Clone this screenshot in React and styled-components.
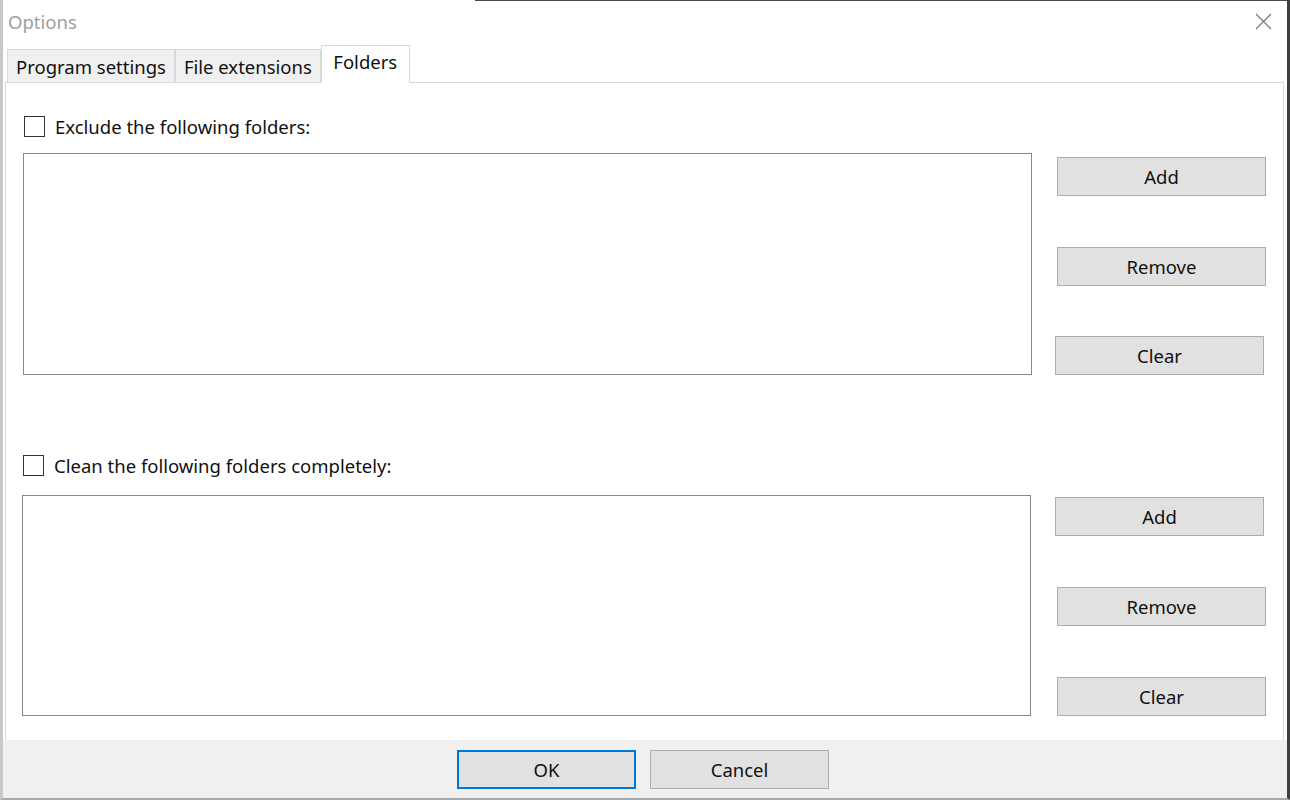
import React from "react";
import styled, { createGlobalStyle } from "styled-components";

const GlobalStyle = createGlobalStyle`
  html, body { margin: 0; padding: 0; background: #ffffff; }
  body { font-family: "Noto Sans", "Open Sans", "Liberation Sans", sans-serif; }
  * { box-sizing: border-box; }
`;

const Window = styled.div`
  width: 1290px;
  height: 800px;
  display: flex;
  flex-direction: column;
  background: #ffffff linear-gradient(#4a4a4a, #4a4a4a) no-repeat 472px 0 / calc(100% - 472px) 1px;
  border-left: 3px solid #c8c8c8;
  border-right: 3px solid #3f3f3f;
  border-bottom: 2px solid #a8a8a8;
  color: #1a1a1a;
`;

const TitleBar = styled.div`
  height: 42px;
  flex: none;
  display: flex;
  align-items: center;
  justify-content: space-between;
  padding: 0 15px 0 5px;
`;

const Title = styled.span`
  font-size: 18.5px;
  color: #a0a0a0;
`;

const CloseButton = styled.button`
  border: 0;
  background: transparent;
  padding: 0;
  width: 18px;
  height: 18px;
  display: flex;
  align-items: center;
  justify-content: center;
`;

const TabStrip = styled.div`
  height: 40px;
  flex: none;
  display: flex;
  align-items: flex-end;
  padding-left: 4px;
  position: relative;
  z-index: 1;
`;

const Tab = styled.div`
  height: ${(p) => (p.$active ? "38px" : "34px")};
  margin-bottom: -1px;
  padding: ${(p) => (p.$active ? "0 11.5px 5px" : "0 8px 0")};
  display: flex;
  align-items: center;
  font-size: 18.5px;
  color: #111;
  background: ${(p) => (p.$active ? "#ffffff" : "#f0f0f0")};
  border: 1px solid #d9d9d9;
  border-bottom: 1px solid ${(p) => (p.$active ? "#ffffff" : "#d9d9d9")};
  & + & { border-left: ${(p) => (p.$active ? "1px solid #d9d9d9" : "0")}; }
`;

const Panel = styled.div`
  flex: 1;
  margin: 0 3px 0 2px;
  border: 1px solid #d9d9d9;
  border-bottom: 0;
  background: #ffffff;
  padding: 33px 15px 24px 17px;
  display: flex;
  flex-direction: column;
`;

const Section = styled.div`
  display: grid;
  grid-template-columns: 1009px 209px;
  column-gap: 25px;
  row-gap: ${(p) => p.$rowGap}px;
  margin-top: ${(p) => p.$top || 0}px;
  margin-left: ${(p) => p.$dx || 0}px;
`;

const CheckRow = styled.label`
  grid-column: 1 / span 2;
  display: flex;
  align-items: center;
  gap: 10px;
  height: 21px;
  margin-left: 1px;
  font-size: 18.5px;
  color: #111;
`;

const CheckBox = styled.span`
  width: 21px;
  height: 21px;
  border: 1px solid #333333;
  background: #ffffff;
  flex: none;
`;

const ListBox = styled.div`
  height: ${(p) => p.$h}px;
  border: 1px solid #828790;
  background: #ffffff;
`;

const ButtonColumn = styled.div`
  display: flex;
  flex-direction: column;
  justify-content: space-between;
  padding-top: ${(p) => p.$pt}px;
`;

const SideButton = styled.button`
  width: 209px;
  height: 39px;
  margin-left: ${(p) => p.$dx || 0}px;
  background: #e1e1e1;
  border: 1px solid #adadad;
  font-family: inherit;
  font-size: 18.5px;
  color: #111;
  padding: 0;
`;

const Footer = styled.div`
  height: 58px;
  flex: none;
  background: #f0f0f0;
  display: flex;
  justify-content: center;
  align-items: flex-start;
  padding: 10px 4px 0 0;
  gap: 14px;
`;

const DialogButton = styled.button`
  width: 179px;
  height: 39px;
  background: #e1e1e1;
  border: ${(p) => (p.$default ? "2px solid #0078d7" : "1px solid #adadad")};
  font-family: inherit;
  font-size: 18.5px;
  color: #111;
  padding: 0;
`;

function FolderSection({ label, top, dx, rowGap, listH, btnTop, buttons }) {
  return (
    <Section $top={top} $dx={dx} $rowGap={rowGap}>
      <CheckRow>
        <CheckBox />
        {label}
      </CheckRow>
      <ListBox $h={listH} />
      <ButtonColumn $pt={btnTop}>
        {buttons.map((b) => (
          <SideButton key={b.text} $dx={b.dx}>
            {b.text}
          </SideButton>
        ))}
      </ButtonColumn>
    </Section>
  );
}

export default function App() {
  return (
    <>
      <GlobalStyle />
      <Window>
        <TitleBar>
          <Title>Options</Title>
          <CloseButton aria-label="Close">
            <svg width="17" height="17" viewBox="0 0 17 17">
              <path d="M1 1L16 16M16 1L1 16" stroke="#7a7a7a" strokeWidth="1.3" fill="none" />
            </svg>
          </CloseButton>
        </TitleBar>
        <TabStrip>
          <Tab>Program settings</Tab>
          <Tab>File extensions</Tab>
          <Tab $active>Folders</Tab>
        </TabStrip>
        <Panel>
          <FolderSection
            label="Exclude the following folders:"
            top={0}
            dx={0}
            rowGap={16}
            listH={222}
            btnTop={4}
            buttons={[
              { text: "Add", dx: 0 },
              { text: "Remove", dx: 0 },
              { text: "Clear", dx: -2 },
            ]}
          />
          <FolderSection
            label="Clean the following folders completely:"
            top={80}
            dx={-1}
            rowGap={19}
            listH={221}
            btnTop={2}
            buttons={[
              { text: "Add", dx: -1 },
              { text: "Remove", dx: 1 },
              { text: "Clear", dx: 1 },
            ]}
          />
        </Panel>
        <Footer>
          <DialogButton $default>OK</DialogButton>
          <DialogButton>Cancel</DialogButton>
        </Footer>
      </Window>
    </>
  );
}
